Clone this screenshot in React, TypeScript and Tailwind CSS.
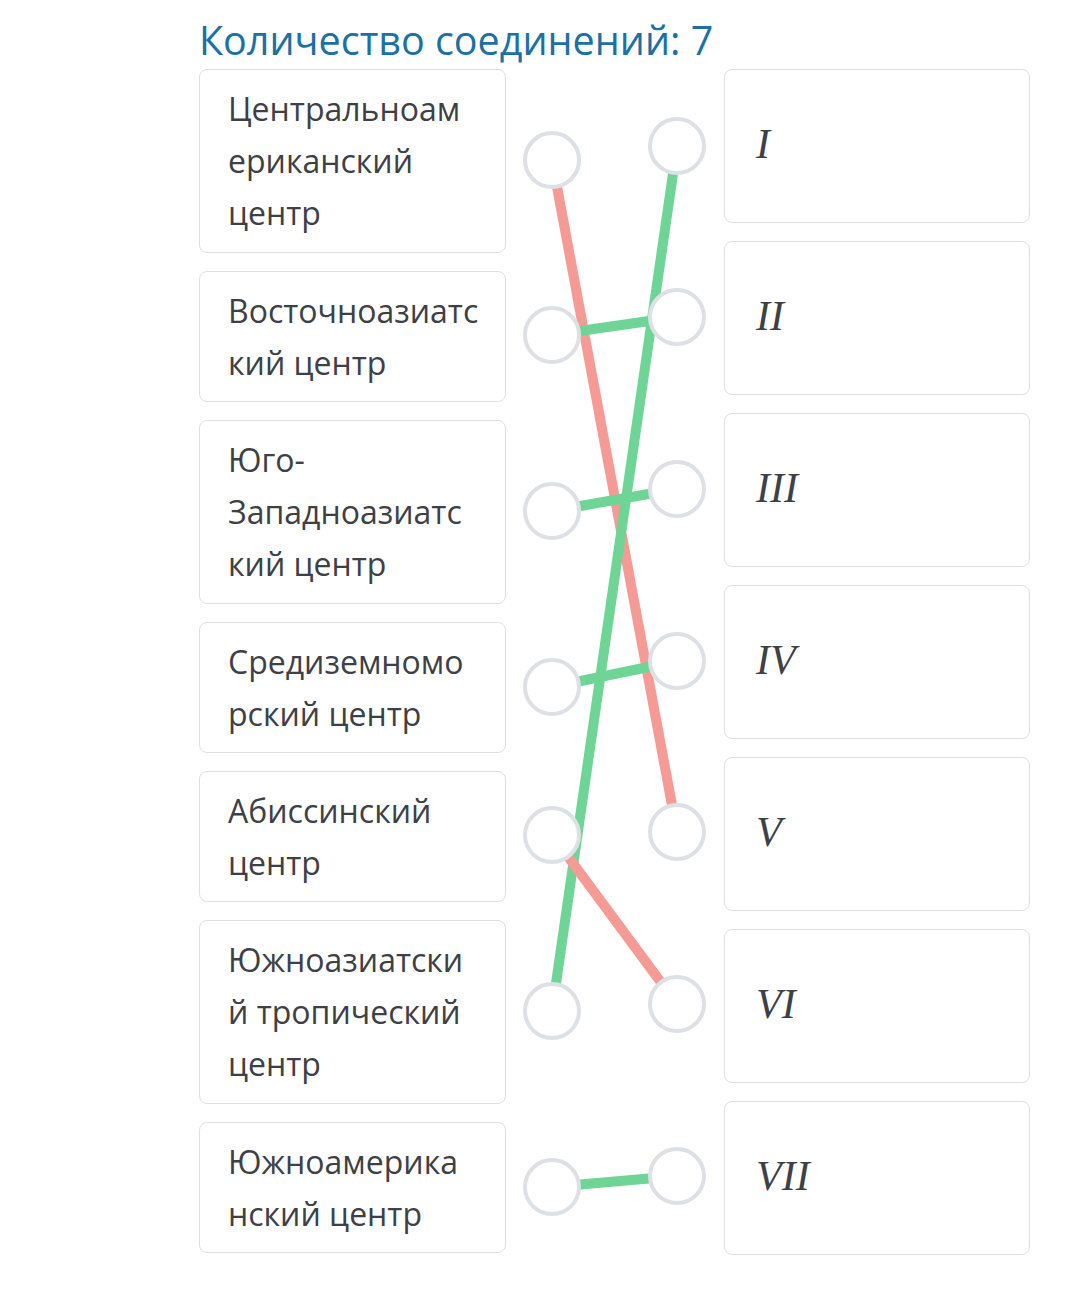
import React from 'react'

const leftItems = [
  { lines: ['Центральноам', 'ериканский', 'центр'] },
  { lines: ['Восточноазиатс', 'кий центр'] },
  { lines: ['Юго-', 'Западноазиатс', 'кий центр'] },
  { lines: ['Средиземномо', 'рский центр'] },
  { lines: ['Абиссинский', 'центр'] },
  { lines: ['Южноазиатски', 'й тропический', 'центр'] },
  { lines: ['Южноамерика', 'нский центр'] },
]

const rightItems = ['I', 'II', 'III', 'IV', 'V', 'VI', 'VII']

// circle centres inside the middle column (x relative to column, y relative to first card top)
const leftX = 46
const rightX = 171
const leftY = [91, 266, 442, 618, 766, 942, 1118]
const rightY = [77, 248, 420, 592, 763, 935, 1107]

const GREEN = '#6fd596'
const RED = '#f59a94'

// [left index, right index, correct]
const links: [number, number, boolean][] = [
  [0, 4, false],
  [5, 0, true],
  [1, 1, true],
  [2, 2, true],
  [3, 3, true],
  [4, 5, false],
  [6, 6, true],
]

const Connector = () => (
  <svg width="218" height="1186" viewBox="0 0 218 1186" className="block">
    {links.map(([l, r, ok], i) => (
      <line
        key={i}
        x1={leftX}
        y1={leftY[l]}
        x2={rightX}
        y2={rightY[r]}
        stroke={ok ? GREEN : RED}
        strokeWidth={10}
      />
    ))}
    {leftY.map((y, i) => (
      <circle key={'l' + i} cx={leftX} cy={y} r={27} fill="#fff" stroke="#dde1e6" strokeWidth={4} />
    ))}
    {rightY.map((y, i) => (
      <circle key={'r' + i} cx={rightX} cy={y} r={27} fill="#fff" stroke="#dde1e6" strokeWidth={4} />
    ))}
  </svg>
)

export default function App() {
  return (
    <div className="min-h-[1306px] bg-white pl-[199px] font-['Open_Sans',sans-serif]">
      <h1 className="pt-[14px] pb-[3px] text-[39.5px] leading-[52px] text-[#1c70a3] font-normal">
        Количество соединений: 7
      </h1>

      <div className="flex">
        <div className="flex w-[307px] flex-col gap-[18px]">
          {leftItems.map((item, i) => (
            <div
              key={i}
              className={`${item.lines.length === 3 ? 'h-[184px]' : 'h-[131px]'} rounded-lg border border-[#dfdfdf] bg-white px-[28px] pt-[13px] text-[32px] leading-[52px] text-[#3d4045]`}
            >
              {item.lines.map((t, j) => (
                <div key={j} className="whitespace-nowrap">{t}</div>
              ))}
            </div>
          ))}
        </div>

        <div className="w-[218px]">
          <Connector />
        </div>

        <div className="flex w-[306px] flex-col gap-[18px]">
          {rightItems.map(n => (
            <div
              key={n}
              className="flex h-[154px] items-center rounded-lg border border-[#dfdfdf] bg-white pl-[31px] pb-[4px] font-['Liberation_Serif',serif] text-[42px] italic text-[#3d4045]"
            >
              {n}
            </div>
          ))}
        </div>
      </div>
    </div>
  )
}
